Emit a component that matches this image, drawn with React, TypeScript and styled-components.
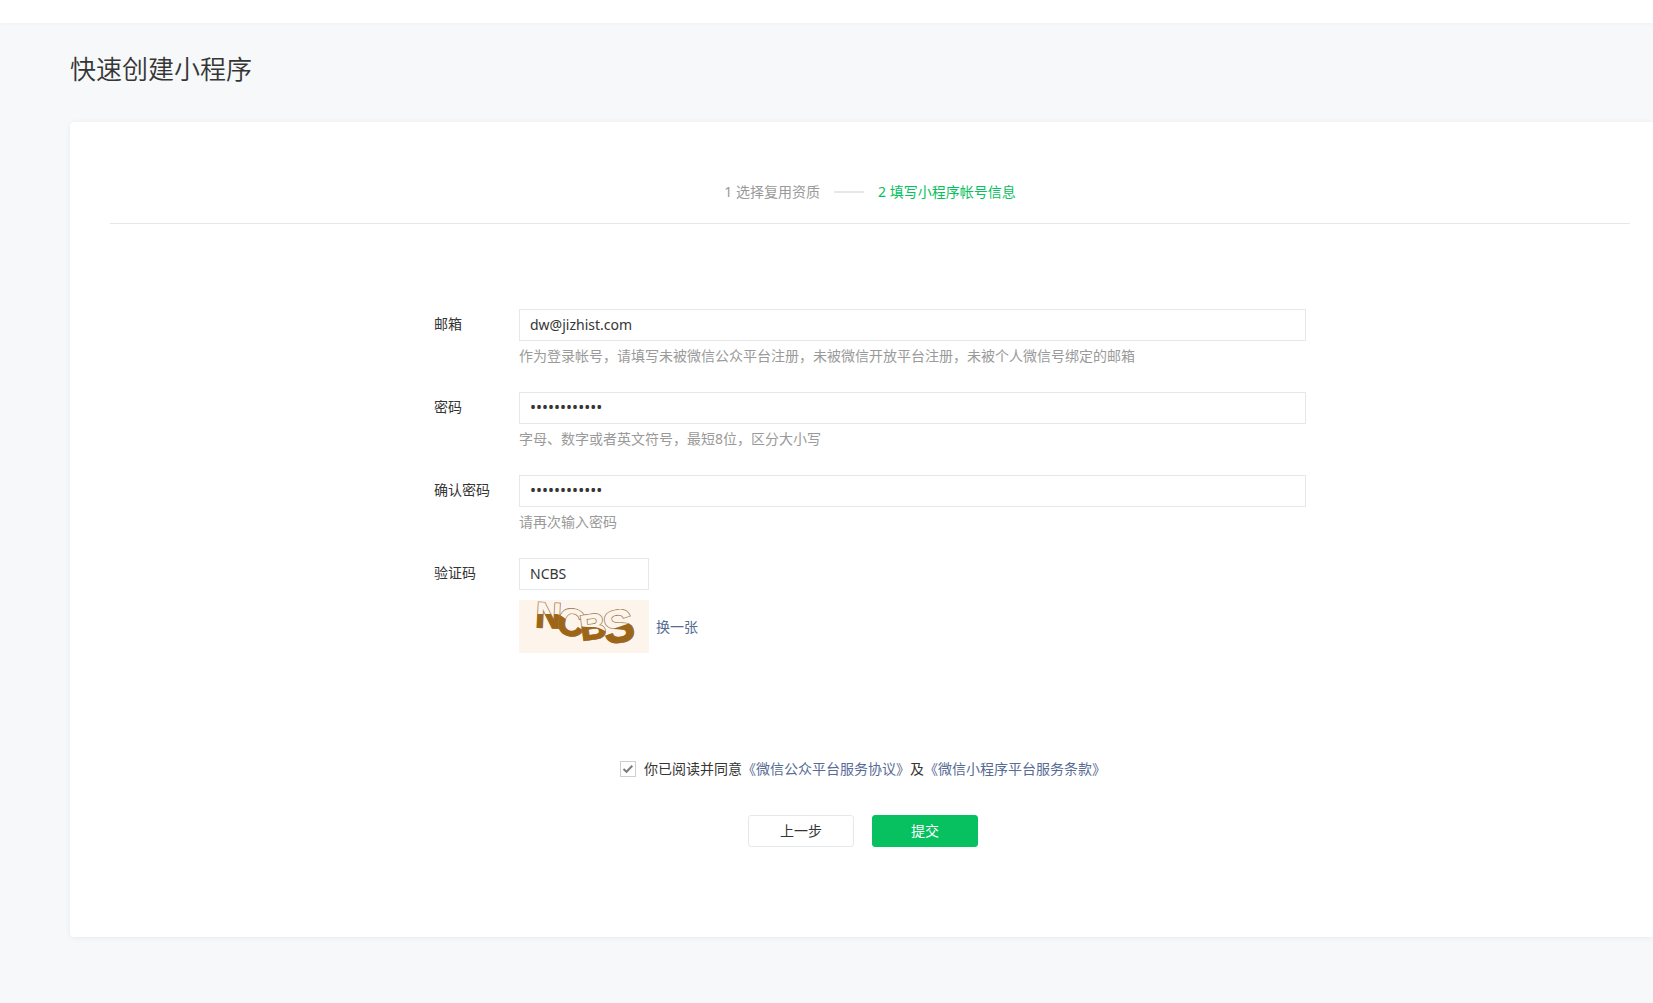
import React, { useState } from "react";
import styled, { createGlobalStyle } from "styled-components";

const color = {
  page: "#f6f8f9",
  surface: "#ffffff",
  text: "#353535",
  muted: "#9a9a9a",
  link: "#576b95",
  brand: "#07c160",
  line: "#e4e8eb",
};

const GlobalStyle = createGlobalStyle`
  *, *::before, *::after { box-sizing: border-box; }
  body {
    margin: 0;
    background: ${color.page};
    color: ${color.text};
    font-family: "Noto Sans", "Noto Sans CJK SC", sans-serif;
    font-size: 14px;
    line-height: 22px;
  }
  input, button { font: inherit; color: inherit; }
`;

const Page = styled.div`
  min-height: 100vh;
  padding-bottom: 60px;
`;

const TopBar = styled.header`
  height: 23px;
  background: ${color.surface};
  box-shadow: 0 1px 4px rgba(0, 0, 0, 0.03);
`;

const Main = styled.main`
  padding: 25px 0 0 70px;
`;

const Title = styled.h1`
  margin: 0 0 34px;
  font-family: "Noto Sans CJK SC", sans-serif;
  font-size: 26px;
  line-height: 40px;
  font-weight: 350;
`;

const Card = styled.section`
  padding: 59px 23px 90px 40px;
  background: ${color.surface};
  border-radius: 4px 0 0 4px;
  box-shadow: 0 1px 6px rgba(0, 0, 0, 0.06);
`;

const Steps = styled.ol`
  display: flex;
  align-items: center;
  justify-content: center;
  gap: 14px;
  margin: 0 0 85px;
  padding: 0 0 20px;
  border-bottom: 1px solid ${color.line};
  list-style: none;
`;

const Step = styled.li<{ $active?: boolean }>`
  display: flex;
  align-items: center;
  gap: 14px;
  height: 22px;
  color: ${(p) => (p.$active ? color.brand : color.muted)};

  &:not(:first-child)::before {
    content: "";
    width: 30px;
    height: 2px;
    background: ${color.line};
  }
`;

const Form = styled.form`
  max-width: 872px;
  margin: 0 auto;
`;

const Field = styled.div`
  display: grid;
  grid-template-columns: 85px minmax(0, 1fr);
  align-items: start;

  & + & { margin-top: 25px; }
`;

const Label = styled.label`
  line-height: 30px;
`;

const TextInput = styled.input<{ $short?: boolean }>`
  display: block;
  width: ${(p) => (p.$short ? "130px" : "100%")};
  height: 32px;
  padding: 0 10px 2px;
  border: 1px solid ${color.line};
  border-radius: 0;
  background: ${color.surface};
  outline: none;

  &[type="password"] { font-size: 16px; }
  &:focus { border-color: ${color.brand}; }
`;

const Hint = styled.p`
  margin: 4px 0 0;
  color: ${color.muted};
`;

const CaptchaRow = styled.div`
  display: flex;
  align-items: center;
  gap: 7px;
  margin-top: 10px;
`;

const CaptchaImage = styled.svg`
  display: block;
  width: 130px;
  height: 53px;
  overflow: visible;
  font-family: "Liberation Sans", Arial, sans-serif;
  font-weight: 700;
`;

const Link = styled.a`
  color: ${color.link};
  text-decoration: none;

  &:hover { text-decoration: underline; }
`;

const Agreement = styled.div`
  display: flex;
  align-items: center;
  justify-content: center;
  gap: 8px;
  height: 22px;
  margin-top: 105px;
  padding-right: 14px;
`;

const CheckWrap = styled.span`
  display: grid;
  width: 16px;
  height: 16px;

  & > * { grid-area: 1 / 1; }
`;

const Checkbox = styled.input`
  appearance: none;
  width: 16px;
  height: 16px;
  margin: 0;
  border: 1px solid #cfcfcf;
  background: ${color.surface};

  &:not(:checked) + svg { visibility: hidden; }
`;

const CheckMark = styled.svg`
  width: 16px;
  height: 16px;
  pointer-events: none;
`;

const Actions = styled.div`
  display: flex;
  justify-content: center;
  gap: 18px;
  margin-top: 35px;
  padding-right: 14px;
`;

const Button = styled.button<{ $primary?: boolean }>`
  width: 106px;
  height: 32px;
  padding: 0;
  border: 1px solid ${(p) => (p.$primary ? color.brand : color.line)};
  border-radius: 3px;
  background: ${(p) => (p.$primary ? color.brand : color.surface)};
  color: ${(p) => (p.$primary ? "#ffffff" : color.text)};
  cursor: pointer;
`;

const captchaLetters = [
  { char: "N", x: 16, y: 27, size: 36, turn: "rotate(3 18 28)" },
  { char: "C", x: 38, y: 35, size: 38, turn: "rotate(12 50 24)" },
  { char: "B", x: 63, y: 41, size: 36, turn: "rotate(-8 62 42)" },
  { char: "S", x: 85, y: 42, size: 46, turn: "rotate(-10 100 30)" },
];

function Captcha() {
  return (
    <CaptchaImage viewBox="0 0 130 53" role="img" aria-label="验证码图片">
      <defs>
        <clipPath id="captcha-fill">
          <path d="M0 14H38C46 16 47 22 58 26C68 28 78 25 86 31C94 31 104 22 130 21V53H0Z" />
        </clipPath>
      </defs>
      <rect width="130" height="53" fill="#fdf5ec" />
      {captchaLetters.map(({ char, x, y, size, turn }) => (
        <g key={char} strokeLinejoin="miter">
          <text x={x} y={y} fontSize={size} transform={turn} fill="#966d3a" stroke="#966d3a" strokeWidth="1.6">
            {char}
          </text>
          <text x={x} y={y} fontSize={size} transform={turn} fill="#fdf5ec" stroke="#fdf5ec" strokeWidth="0.2">
            {char}
          </text>
          <g clipPath="url(#captcha-fill)">
            <text x={x} y={y} fontSize={size} transform={turn} fill="#9c6518" stroke="#9c6518" strokeWidth="1.2">
              {char}
            </text>
          </g>
        </g>
      ))}
    </CaptchaImage>
  );
}

export default function App() {
  const [email, setEmail] = useState("dw@jizhist.com");
  const [password, setPassword] = useState("abcdefgh1234");
  const [confirm, setConfirm] = useState("abcdefgh1234");
  const [code, setCode] = useState("NCBS");
  const [agreed, setAgreed] = useState(true);

  return (
    <>
      <GlobalStyle />
      <Page lang="zh-CN">
        <TopBar />
        <Main>
          <Title>快速创建小程序</Title>
          <Card>
            <Steps>
              <Step>1 选择复用资质</Step>
              <Step $active aria-current="step">2 填写小程序帐号信息</Step>
            </Steps>
            <Form onSubmit={(e) => e.preventDefault()}>
              <Field>
                <Label htmlFor="email">邮箱</Label>
                <div>
                  <TextInput id="email" type="text" value={email} onChange={(e) => setEmail(e.target.value)} />
                  <Hint>作为登录帐号，请填写未被微信公众平台注册，未被微信开放平台注册，未被个人微信号绑定的邮箱</Hint>
                </div>
              </Field>
              <Field>
                <Label htmlFor="password">密码</Label>
                <div>
                  <TextInput id="password" type="password" value={password} onChange={(e) => setPassword(e.target.value)} />
                  <Hint>字母、数字或者英文符号，最短8位，区分大小写</Hint>
                </div>
              </Field>
              <Field>
                <Label htmlFor="confirm">确认密码</Label>
                <div>
                  <TextInput id="confirm" type="password" value={confirm} onChange={(e) => setConfirm(e.target.value)} />
                  <Hint>请再次输入密码</Hint>
                </div>
              </Field>
              <Field>
                <Label htmlFor="code">验证码</Label>
                <div>
                  <TextInput id="code" type="text" $short value={code} onChange={(e) => setCode(e.target.value)} />
                  <CaptchaRow>
                    <Captcha />
                    <Link href="#refresh">换一张</Link>
                  </CaptchaRow>
                </div>
              </Field>
              <Agreement>
                <CheckWrap>
                  <Checkbox id="agree" type="checkbox" checked={agreed} onChange={(e) => setAgreed(e.target.checked)} />
                  <CheckMark viewBox="0 0 16 16" aria-hidden="true">
                    <path d="M3.5 8L6.5 10.8L12.3 4.8" fill="none" stroke="#7d7d7d" strokeWidth="2" />
                  </CheckMark>
                </CheckWrap>
                <span>
                  <label htmlFor="agree">你已阅读并同意</label>
                  <Link href="#platform">《微信公众平台服务协议》</Link>
                  及
                  <Link href="#miniprogram">《微信小程序平台服务条款》</Link>
                </span>
              </Agreement>
              <Actions>
                <Button type="button">上一步</Button>
                <Button type="submit" $primary>提交</Button>
              </Actions>
            </Form>
          </Card>
        </Main>
      </Page>
    </>
  );
}
